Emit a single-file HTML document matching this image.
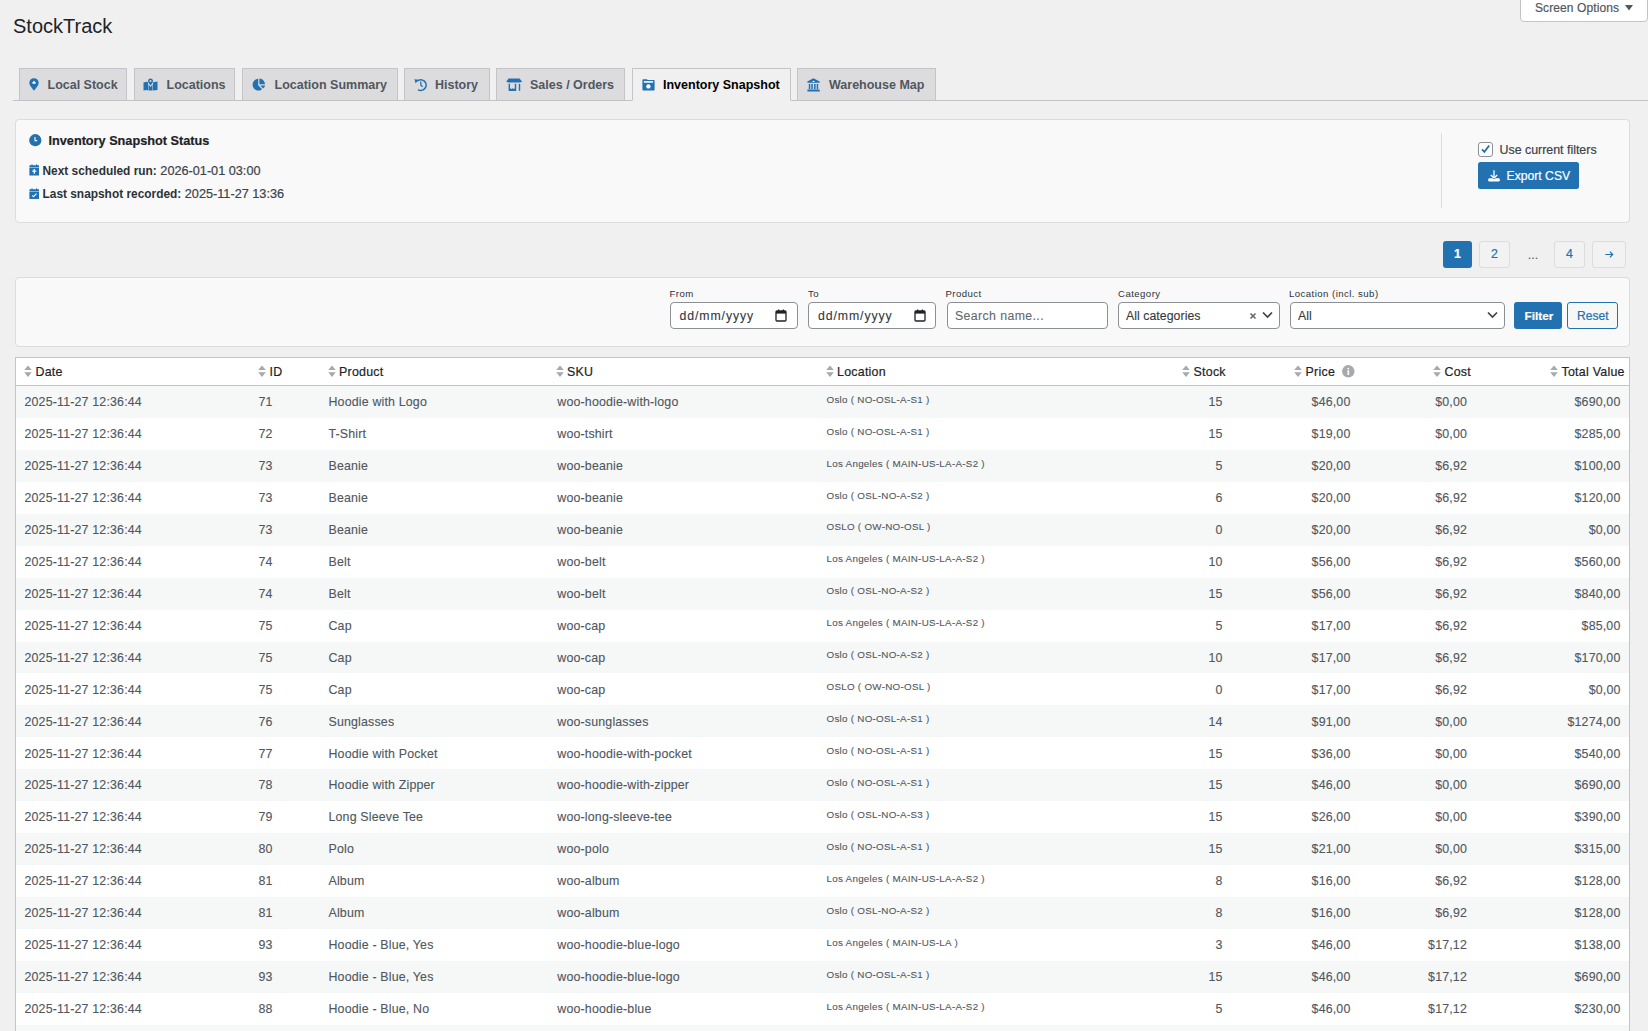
<!DOCTYPE html>
<html><head><meta charset="utf-8">
<style>
*{box-sizing:border-box;margin:0;padding:0}
html,body{width:1648px;height:1031px;overflow:hidden;background:#f0f0f1;font-family:"Liberation Sans",sans-serif;color:#3c434a}
.a{position:absolute;white-space:nowrap}
.t{position:absolute;white-space:nowrap;line-height:1;-webkit-text-stroke:0.2px currentColor}
.t b{-webkit-text-stroke:0}
.ht{-webkit-text-stroke:0.2px currentColor}
.it{-webkit-text-stroke:0.1px currentColor}
.loc{-webkit-text-stroke:0.1px currentColor}
.lbl{-webkit-text-stroke:0}
h1{position:absolute;left:13px;top:16px;font-size:20px;font-weight:400;line-height:20px;color:#1d2327}
.so{position:absolute;left:1520px;top:-4px;width:128px;height:26px;background:#fff;border:1px solid #c3c4c7;border-radius:0 0 4px 4px}
.tabline{position:absolute;left:13px;top:100px;width:1635px;height:1px;background:#c3c4c7}
.tab{position:absolute;top:68px;height:33px;background:#dcdcde;border:1px solid #c3c4c7;}
.tab.act{background:#f0f0f1;border-bottom-color:#f0f0f1}
.tabt{position:absolute;top:78.8px;font-size:12.5px;font-weight:700;line-height:12.5px;color:#50575e;white-space:nowrap}
.tabt.act{color:#000}
.ico{position:absolute}
.card{position:absolute;left:15px;width:1615px;background:#f9f9f9;border:1px solid #dcdcde;border-radius:4px}
.lbl{position:absolute;top:289.2px;font-size:9.6px;line-height:9.6px;letter-spacing:0.45px;color:#2c3338;white-space:nowrap}
.inp{position:absolute;top:302px;height:27px;background:#fff;border:1px solid #8c8f94;border-radius:4px}
.it{position:absolute;top:310px;font-size:12.3px;line-height:12.3px;color:#32383e;white-space:nowrap}
.btn{position:absolute;border-radius:3px}
.tbl{position:absolute;left:15px;top:357px;width:1615px;height:700px;background:#fff;border:1px solid #c3c4c7}
.hline{position:absolute;left:15px;top:385px;width:1615px;height:1px;background:#c3c4c7}
.ht{position:absolute;top:366px;font-size:12.4px;line-height:12.4px;letter-spacing:0.26px;color:#1d2327;white-space:nowrap}
.sort{position:absolute;top:365px}
.r{position:absolute;left:16px;width:1613px;height:31.9px}
.r.odd{background:#f6f7f7}
.r span{position:absolute;white-space:nowrap}
.c{top:10.2px;font-size:12.4px;line-height:12.4px;letter-spacing:0.17px;color:#50575e;-webkit-text-stroke:0.12px currentColor}
.loc{top:8.7px;font-size:9.8px;line-height:9.8px;letter-spacing:0.28px;color:#50575e}
</style></head><body>

<h1>StockTrack</h1>
<div class="so"></div>
<div class="t" style="left:1535px;top:2px;font-size:12px;letter-spacing:0.1px;color:#50575e">Screen Options</div>
<svg class="ico" style="left:1625px;top:5px" width="8" height="6" viewBox="0 0 8 6"><path d="M0 0H8L4 5.5Z" fill="#50575e"/></svg>

<!-- tabs -->
<div class="tabline"></div>
<div class="tab" style="left:19px;width:108px"></div>
<div class="tab" style="left:134px;width:101px"></div>
<div class="tab" style="left:242px;width:156px"></div>
<div class="tab" style="left:404px;width:86px"></div>
<div class="tab" style="left:496px;width:129px"></div>
<div class="tab act" style="left:632px;width:159px"></div>
<div class="tab" style="left:797px;width:139px"></div>

<span class="tabt" style="left:47.5px">Local Stock</span>
<span class="tabt" style="left:166.5px">Locations</span>
<span class="tabt" style="left:274.5px">Location Summary</span>
<span class="tabt" style="left:435px">History</span>
<span class="tabt" style="left:530px">Sales / Orders</span>
<span class="tabt act" style="left:663px">Inventory Snapshot</span>
<span class="tabt" style="left:829px">Warehouse Map</span>

<!-- tab icons -->
<svg class="ico" style="left:28.5px;top:77.5px" width="10" height="13" viewBox="0 0 10 13"><path d="M5 0.3C2.3 0.3 0.3 2.2 0.3 4.7C0.3 7.3 2.6 9.6 5 12.7C7.4 9.6 9.7 7.3 9.7 4.7C9.7 2.2 7.7 0.3 5 0.3Z" fill="#2271b1"/><path d="M5 2.8L6.6 4.4V5.8H3.4V4.4Z" fill="#fff"/></svg>
<svg class="ico" style="left:143px;top:77.5px" width="15" height="13" viewBox="0 0 15 13"><path d="M0.5 4.5L3.5 3.8L5 4.3V12.5L3.5 12L0.5 12.6Z M10 4.3L14.5 3.5V12L10 12.6Z" fill="#2271b1"/><path d="M7.5 0.5C6 0.5 5 1.6 5 3C5 4.3 6.2 5.8 7.5 7.5C8.8 5.8 10 4.3 10 3C10 1.6 9 0.5 7.5 0.5Z M7.5 2A1 1 0 1 0 7.5 4A1 1 0 1 0 7.5 2Z M5.5 6.5L7.5 9L9.5 6.5V12.6L5.5 12.5Z" fill="#2271b1" fill-rule="evenodd"/></svg>
<svg class="ico" style="left:251.8px;top:77.5px" width="14" height="13" viewBox="0 0 14 13"><path d="M6.2 0.8C3 1 0.6 3.6 0.6 6.8C0.6 10.1 3.3 12.6 6.4 12.6C7.9 12.6 9.1 12.1 10.1 11.3L6.2 7.2Z" fill="#2271b1"/><path d="M7.4 0.4V6.2H13C12.8 3.1 10.4 0.6 7.4 0.4Z" fill="#2271b1"/><path d="M8.3 7.4L11 10.5C12 9.6 12.8 8.6 13.2 7.4Z" fill="#2271b1"/></svg>
<svg class="ico" style="left:413.5px;top:77.5px" width="14" height="14" viewBox="0 0 14 14"><path d="M3.2 3.2A5.3 5.3 0 1 1 4 11.6" fill="none" stroke="#2271b1" stroke-width="1.6"/><path d="M0.4 1.2L4.6 1.7L1.6 5.2Z" fill="#2271b1"/><path d="M6.8 3.4V6.9L8.6 8.8" fill="none" stroke="#2271b1" stroke-width="1.3"/></svg>
<svg class="ico" style="left:505.5px;top:77.5px" width="17" height="14" viewBox="0 0 17 14"><path d="M2.5 0.5H13.5L16.2 3.7L13.6 4.6H2.4L0.2 3.7Z" fill="#2271b1"/><path d="M2.6 5.8H4V10.3L5.4 11L6.6 10.3L7.8 11L8.8 10.3V5.8H10.2V13H2.6Z" fill="#2271b1"/><rect x="12.8" y="5.8" width="1.4" height="7" fill="#2271b1"/></svg>
<svg class="ico" style="left:641.5px;top:78.5px" width="13" height="12" viewBox="0 0 13 12"><path d="M1.3 0.2H5L5.6 1H11.8Q12.6 1 12.6 1.8V10.8Q12.6 11.6 11.8 11.6H1.2Q0.4 11.6 0.4 10.8V1.1Q0.4 0.2 1.3 0.2Z" fill="#2271b1"/><rect x="1.8" y="2.1" width="9.3" height="1.6" fill="#fff"/><circle cx="6.4" cy="7.4" r="2.2" fill="#fff"/></svg>
<svg class="ico" style="left:807px;top:77.5px" width="14" height="14" viewBox="0 0 14 14"><path d="M6.5 0.3L12.7 3.5V4.8H0.4V3.5Z" fill="#2271b1"/><rect x="1.8" y="5.9" width="1.5" height="5.2" fill="#2271b1"/><rect x="4.3" y="5.9" width="1.5" height="5.2" fill="#2271b1"/><rect x="7.1" y="5.9" width="1.5" height="5.2" fill="#2271b1"/><rect x="9.7" y="5.9" width="1.5" height="5.2" fill="#2271b1"/><rect x="0.4" y="11.5" width="12.3" height="2" fill="#2271b1"/><ellipse cx="6.5" cy="3.3" rx="1.2" ry="0.6" fill="#fff"/></svg>

<!-- status card -->
<div class="card" style="top:119px;height:104px"></div>
<svg class="ico" style="left:29px;top:134px" width="13" height="13" viewBox="0 0 13 13"><circle cx="6.3" cy="6.2" r="6.1" fill="#2271b1"/><path d="M6 3V6.6H8.2" fill="none" stroke="#fff" stroke-width="1.1"/></svg>
<span class="t" style="left:48.5px;top:134.5px;font-size:12.7px;font-weight:700;color:#1d2327">Inventory Snapshot Status</span>
<svg class="ico" style="left:28.7px;top:164.4px" width="10.6" height="11.8" viewBox="0 0 11 12" preserveAspectRatio="none"><path d="M1 1.3H2.6V0.3H3.6V1.3H7.4V0.3H8.4V1.3H10Q10.6 1.3 10.6 1.9V3.2H0.4V1.9Q0.4 1.3 1 1.3Z M0.4 3.9H10.6V11.2Q10.6 11.8 10 11.8H1Q0.4 11.8 0.4 11.2Z" fill="#2271b1"/><path d="M5.5 5.2V9.8M3.4 7.3H7.6" stroke="#fff" stroke-width="1.3"/></svg>
<span class="t" style="left:42.5px;top:165px;font-size:12.7px;color:#3c434a"><b style="color:#2c3338;font-size:11.9px">Next scheduled run:</b> 2026-01-01 03:00</span>
<svg class="ico" style="left:28.7px;top:187.5px" width="10.6" height="11.8" viewBox="0 0 11 12" preserveAspectRatio="none"><path d="M1 1.3H2.6V0.3H3.6V1.3H7.4V0.3H8.4V1.3H10Q10.6 1.3 10.6 1.9V3.2H0.4V1.9Q0.4 1.3 1 1.3Z M0.4 3.9H10.6V11.2Q10.6 11.8 10 11.8H1Q0.4 11.8 0.4 11.2Z" fill="#2271b1"/><path d="M3.3 7.4L4.7 8.8L7.8 5.8" fill="none" stroke="#fff" stroke-width="1.1"/></svg>
<span class="t" style="left:42.5px;top:188px;font-size:12.7px;color:#3c434a"><b style="color:#2c3338;font-size:11.9px">Last snapshot recorded:</b> 2025-11-27 13:36</span>

<div class="a" style="left:1441px;top:133px;width:1px;height:75px;background:#dcdcde"></div>
<div class="a" style="left:1478px;top:142px;width:15px;height:15px;background:#fff;border:1px solid #8c8f94;border-radius:3px"></div>
<svg class="ico" style="left:1479px;top:143px" width="13" height="13" viewBox="0 0 13 13"><path d="M3 6.3L5.4 8.8L10.2 2.5" fill="none" stroke="#2271b1" stroke-width="1.8"/></svg>
<span class="t" style="left:1499.5px;top:144px;font-size:12.4px;color:#3c434a">Use current filters</span>
<div class="btn" style="left:1478px;top:162px;width:101px;height:27px;background:#2271b1;border-radius:2.5px"></div>
<svg class="ico" style="left:1488px;top:170px" width="12" height="12" viewBox="0 0 12 12"><path d="M6 0.2V8" stroke="#fff" stroke-width="1.3"/><path d="M2.8 4.9L6 8L9.2 4.9" stroke="#fff" stroke-width="1.4" fill="none"/><rect x="0.2" y="8.2" width="11.6" height="3.4" rx="1.3" fill="#fff"/><path d="M4.2 8.2L6 9.3L7.8 8.2Z" fill="#2271b1"/></svg>
<span class="t" style="left:1506.5px;top:170px;font-size:12.2px;color:#fff">Export CSV</span>

<!-- pagination -->
<div class="btn" style="left:1443px;top:241px;width:29px;height:27px;background:#2271b1"></div>
<span class="t" style="left:1454px;top:248.3px;font-size:12.4px;font-weight:700;color:#fff">1</span>
<div class="btn" style="left:1479px;top:241px;width:31px;height:27px;background:#f2f2f3;border:1px solid #dcdcde"></div>
<span class="t" style="left:1491px;top:248.3px;font-size:12.4px;color:#2271b1">2</span>
<span class="t" style="left:1527.5px;top:249.5px;font-size:11px;color:#50575e">…</span>
<div class="btn" style="left:1554px;top:241px;width:31px;height:27px;background:#f2f2f3;border:1px solid #dcdcde"></div>
<span class="t" style="left:1566px;top:248.3px;font-size:12.4px;color:#2271b1">4</span>
<div class="btn" style="left:1592px;top:241px;width:34px;height:27px;background:#f2f2f3;border:1px solid #dcdcde"></div>
<svg class="ico" style="left:1605px;top:250.5px" width="9" height="7" viewBox="0 0 9 7"><path d="M0.3 3.5H7.6M4.9 0.7L7.7 3.5L4.9 6.3" fill="none" stroke="#2271b1" stroke-width="1.2"/></svg>

<!-- filter card -->
<div class="card" style="top:277px;height:70px"></div>
<span class="lbl" style="left:669.5px">From</span>
<div class="inp" style="left:670px;width:128px"></div>
<span class="it" style="left:679.5px;letter-spacing:0.9px">dd/mm/yyyy</span>
<svg class="ico" style="left:775px;top:309px" width="12" height="13" viewBox="0 0 12 13"><rect x="1" y="2" width="10" height="10" rx="1" fill="none" stroke="#1d2327" stroke-width="1.3"/><rect x="1" y="2" width="10" height="2.6" fill="#1d2327"/><rect x="3" y="0.5" width="1.2" height="2" fill="#1d2327"/><rect x="7.8" y="0.5" width="1.2" height="2" fill="#1d2327"/></svg>
<span class="lbl" style="left:808px">To</span>
<div class="inp" style="left:808px;width:128px"></div>
<span class="it" style="left:818px;letter-spacing:0.9px">dd/mm/yyyy</span>
<svg class="ico" style="left:913.5px;top:309px" width="12" height="13" viewBox="0 0 12 13"><rect x="1" y="2" width="10" height="10" rx="1" fill="none" stroke="#1d2327" stroke-width="1.3"/><rect x="1" y="2" width="10" height="2.6" fill="#1d2327"/><rect x="3" y="0.5" width="1.2" height="2" fill="#1d2327"/><rect x="7.8" y="0.5" width="1.2" height="2" fill="#1d2327"/></svg>
<span class="lbl" style="left:945.5px">Product</span>
<div class="inp" style="left:947px;width:161px"></div>
<span class="it" style="left:955px;color:#646970;letter-spacing:0.4px">Search name...</span>
<span class="lbl" style="left:1118px">Category</span>
<div class="inp" style="left:1118px;width:162px"></div>
<span class="it" style="left:1126px;letter-spacing:0.05px">All categories</span>
<svg class="ico" style="left:1249px;top:312px" width="8" height="8" viewBox="0 0 8 8"><path d="M1.5 1.5L6.5 6.5M6.5 1.5L1.5 6.5" stroke="#646970" stroke-width="1.6"/></svg>
<svg class="ico" style="left:1262px;top:311px" width="11" height="8" viewBox="0 0 11 8"><path d="M1 1.5L5.5 6L10 1.5" fill="none" stroke="#3c434a" stroke-width="1.7"/></svg>
<span class="lbl" style="left:1289px">Location (incl. sub)</span>
<div class="inp" style="left:1290px;width:215px"></div>
<span class="it" style="left:1298px">All</span>
<svg class="ico" style="left:1486.5px;top:311px" width="11" height="8" viewBox="0 0 11 8"><path d="M1 1.5L5.5 6L10 1.5" fill="none" stroke="#3c434a" stroke-width="1.7"/></svg>
<div class="btn" style="left:1514px;top:302px;width:48px;height:27px;background:#2271b1"></div>
<span class="t" style="left:1524.5px;top:310.5px;font-size:11.8px;font-weight:700;color:#fff">Filter</span>
<div class="btn" style="left:1567px;top:302px;width:51px;height:27px;background:#f6f7f7;border:1px solid #2271b1"></div>
<span class="t" style="left:1577px;top:310px;font-size:12.1px;color:#2271b1">Reset</span>

<!-- table -->
<div class="tbl"></div>
<div class="hline"></div>
<div style="position:absolute;left:24px"><svg class="sort" width="8" height="12" viewBox="0 0 8 12"><path d="M4 0.4L7.8 5H0.2Z M4 12L7.8 7.2H0.2Z" fill="#a7aaad"/></svg></div>
<span class="ht" style="left:35.5px">Date</span>
<div style="position:absolute;left:257.5px"><svg class="sort" width="8" height="12" viewBox="0 0 8 12"><path d="M4 0.4L7.8 5H0.2Z M4 12L7.8 7.2H0.2Z" fill="#a7aaad"/></svg></div>
<span class="ht" style="left:269.5px">ID</span>
<div style="position:absolute;left:327.5px"><svg class="sort" width="8" height="12" viewBox="0 0 8 12"><path d="M4 0.4L7.8 5H0.2Z M4 12L7.8 7.2H0.2Z" fill="#a7aaad"/></svg></div>
<span class="ht" style="left:339px">Product</span>
<div style="position:absolute;left:556px"><svg class="sort" width="8" height="12" viewBox="0 0 8 12"><path d="M4 0.4L7.8 5H0.2Z M4 12L7.8 7.2H0.2Z" fill="#a7aaad"/></svg></div>
<span class="ht" style="left:567px">SKU</span>
<div style="position:absolute;left:826px"><svg class="sort" width="8" height="12" viewBox="0 0 8 12"><path d="M4 0.4L7.8 5H0.2Z M4 12L7.8 7.2H0.2Z" fill="#a7aaad"/></svg></div>
<span class="ht" style="left:837px">Location</span>
<div style="position:absolute;left:1181.5px"><svg class="sort" width="8" height="12" viewBox="0 0 8 12"><path d="M4 0.4L7.8 5H0.2Z M4 12L7.8 7.2H0.2Z" fill="#a7aaad"/></svg></div>
<span class="ht" style="left:1193.5px">Stock</span>
<div style="position:absolute;left:1294px"><svg class="sort" width="8" height="12" viewBox="0 0 8 12"><path d="M4 0.4L7.8 5H0.2Z M4 12L7.8 7.2H0.2Z" fill="#a7aaad"/></svg></div>
<span class="ht" style="left:1305.5px">Price</span>
<svg class="ico" style="left:1341.5px;top:365px" width="13" height="13" viewBox="0 0 13 13"><circle cx="6.3" cy="6.3" r="6.2" fill="#a7aaad"/><circle cx="6.3" cy="3.6" r="0.9" fill="#fff"/><rect x="5.5" y="5.2" width="1.6" height="4.8" fill="#fff"/></svg>
<div style="position:absolute;left:1432.5px"><svg class="sort" width="8" height="12" viewBox="0 0 8 12"><path d="M4 0.4L7.8 5H0.2Z M4 12L7.8 7.2H0.2Z" fill="#a7aaad"/></svg></div>
<span class="ht" style="left:1444.5px">Cost</span>
<div style="position:absolute;left:1549.5px"><svg class="sort" width="8" height="12" viewBox="0 0 8 12"><path d="M4 0.4L7.8 5H0.2Z M4 12L7.8 7.2H0.2Z" fill="#a7aaad"/></svg></div>
<span class="ht" style="left:1561.5px">Total Value</span>

<div class="r odd" style="top:386.00px"><span class="c" style="left:8.5px">2025-11-27 12:36:44</span><span class="c" style="left:242.5px">71</span><span class="c" style="left:312.5px">Hoodie with Logo</span><span class="c" style="left:541.3px">woo-hoodie-with-logo</span><span class="loc" style="left:810.5px">Oslo ( NO-OSL-A-S1 )</span><span class="c" style="right:406.5px">15</span><span class="c" style="right:278.5px">$46,00</span><span class="c" style="right:162px">$0,00</span><span class="c" style="right:8.5px">$690,00</span></div>
<div class="r" style="top:417.94px"><span class="c" style="left:8.5px">2025-11-27 12:36:44</span><span class="c" style="left:242.5px">72</span><span class="c" style="left:312.5px">T-Shirt</span><span class="c" style="left:541.3px">woo-tshirt</span><span class="loc" style="left:810.5px">Oslo ( NO-OSL-A-S1 )</span><span class="c" style="right:406.5px">15</span><span class="c" style="right:278.5px">$19,00</span><span class="c" style="right:162px">$0,00</span><span class="c" style="right:8.5px">$285,00</span></div>
<div class="r odd" style="top:449.88px"><span class="c" style="left:8.5px">2025-11-27 12:36:44</span><span class="c" style="left:242.5px">73</span><span class="c" style="left:312.5px">Beanie</span><span class="c" style="left:541.3px">woo-beanie</span><span class="loc" style="left:810.5px">Los Angeles ( MAIN-US-LA-A-S2 )</span><span class="c" style="right:406.5px">5</span><span class="c" style="right:278.5px">$20,00</span><span class="c" style="right:162px">$6,92</span><span class="c" style="right:8.5px">$100,00</span></div>
<div class="r" style="top:481.82px"><span class="c" style="left:8.5px">2025-11-27 12:36:44</span><span class="c" style="left:242.5px">73</span><span class="c" style="left:312.5px">Beanie</span><span class="c" style="left:541.3px">woo-beanie</span><span class="loc" style="left:810.5px">Oslo ( OSL-NO-A-S2 )</span><span class="c" style="right:406.5px">6</span><span class="c" style="right:278.5px">$20,00</span><span class="c" style="right:162px">$6,92</span><span class="c" style="right:8.5px">$120,00</span></div>
<div class="r odd" style="top:513.76px"><span class="c" style="left:8.5px">2025-11-27 12:36:44</span><span class="c" style="left:242.5px">73</span><span class="c" style="left:312.5px">Beanie</span><span class="c" style="left:541.3px">woo-beanie</span><span class="loc" style="left:810.5px">OSLO ( OW-NO-OSL )</span><span class="c" style="right:406.5px">0</span><span class="c" style="right:278.5px">$20,00</span><span class="c" style="right:162px">$6,92</span><span class="c" style="right:8.5px">$0,00</span></div>
<div class="r" style="top:545.70px"><span class="c" style="left:8.5px">2025-11-27 12:36:44</span><span class="c" style="left:242.5px">74</span><span class="c" style="left:312.5px">Belt</span><span class="c" style="left:541.3px">woo-belt</span><span class="loc" style="left:810.5px">Los Angeles ( MAIN-US-LA-A-S2 )</span><span class="c" style="right:406.5px">10</span><span class="c" style="right:278.5px">$56,00</span><span class="c" style="right:162px">$6,92</span><span class="c" style="right:8.5px">$560,00</span></div>
<div class="r odd" style="top:577.64px"><span class="c" style="left:8.5px">2025-11-27 12:36:44</span><span class="c" style="left:242.5px">74</span><span class="c" style="left:312.5px">Belt</span><span class="c" style="left:541.3px">woo-belt</span><span class="loc" style="left:810.5px">Oslo ( OSL-NO-A-S2 )</span><span class="c" style="right:406.5px">15</span><span class="c" style="right:278.5px">$56,00</span><span class="c" style="right:162px">$6,92</span><span class="c" style="right:8.5px">$840,00</span></div>
<div class="r" style="top:609.58px"><span class="c" style="left:8.5px">2025-11-27 12:36:44</span><span class="c" style="left:242.5px">75</span><span class="c" style="left:312.5px">Cap</span><span class="c" style="left:541.3px">woo-cap</span><span class="loc" style="left:810.5px">Los Angeles ( MAIN-US-LA-A-S2 )</span><span class="c" style="right:406.5px">5</span><span class="c" style="right:278.5px">$17,00</span><span class="c" style="right:162px">$6,92</span><span class="c" style="right:8.5px">$85,00</span></div>
<div class="r odd" style="top:641.52px"><span class="c" style="left:8.5px">2025-11-27 12:36:44</span><span class="c" style="left:242.5px">75</span><span class="c" style="left:312.5px">Cap</span><span class="c" style="left:541.3px">woo-cap</span><span class="loc" style="left:810.5px">Oslo ( OSL-NO-A-S2 )</span><span class="c" style="right:406.5px">10</span><span class="c" style="right:278.5px">$17,00</span><span class="c" style="right:162px">$6,92</span><span class="c" style="right:8.5px">$170,00</span></div>
<div class="r" style="top:673.46px"><span class="c" style="left:8.5px">2025-11-27 12:36:44</span><span class="c" style="left:242.5px">75</span><span class="c" style="left:312.5px">Cap</span><span class="c" style="left:541.3px">woo-cap</span><span class="loc" style="left:810.5px">OSLO ( OW-NO-OSL )</span><span class="c" style="right:406.5px">0</span><span class="c" style="right:278.5px">$17,00</span><span class="c" style="right:162px">$6,92</span><span class="c" style="right:8.5px">$0,00</span></div>
<div class="r odd" style="top:705.40px"><span class="c" style="left:8.5px">2025-11-27 12:36:44</span><span class="c" style="left:242.5px">76</span><span class="c" style="left:312.5px">Sunglasses</span><span class="c" style="left:541.3px">woo-sunglasses</span><span class="loc" style="left:810.5px">Oslo ( NO-OSL-A-S1 )</span><span class="c" style="right:406.5px">14</span><span class="c" style="right:278.5px">$91,00</span><span class="c" style="right:162px">$0,00</span><span class="c" style="right:8.5px">$1274,00</span></div>
<div class="r" style="top:737.34px"><span class="c" style="left:8.5px">2025-11-27 12:36:44</span><span class="c" style="left:242.5px">77</span><span class="c" style="left:312.5px">Hoodie with Pocket</span><span class="c" style="left:541.3px">woo-hoodie-with-pocket</span><span class="loc" style="left:810.5px">Oslo ( NO-OSL-A-S1 )</span><span class="c" style="right:406.5px">15</span><span class="c" style="right:278.5px">$36,00</span><span class="c" style="right:162px">$0,00</span><span class="c" style="right:8.5px">$540,00</span></div>
<div class="r odd" style="top:769.28px"><span class="c" style="left:8.5px">2025-11-27 12:36:44</span><span class="c" style="left:242.5px">78</span><span class="c" style="left:312.5px">Hoodie with Zipper</span><span class="c" style="left:541.3px">woo-hoodie-with-zipper</span><span class="loc" style="left:810.5px">Oslo ( NO-OSL-A-S1 )</span><span class="c" style="right:406.5px">15</span><span class="c" style="right:278.5px">$46,00</span><span class="c" style="right:162px">$0,00</span><span class="c" style="right:8.5px">$690,00</span></div>
<div class="r" style="top:801.22px"><span class="c" style="left:8.5px">2025-11-27 12:36:44</span><span class="c" style="left:242.5px">79</span><span class="c" style="left:312.5px">Long Sleeve Tee</span><span class="c" style="left:541.3px">woo-long-sleeve-tee</span><span class="loc" style="left:810.5px">Oslo ( OSL-NO-A-S3 )</span><span class="c" style="right:406.5px">15</span><span class="c" style="right:278.5px">$26,00</span><span class="c" style="right:162px">$0,00</span><span class="c" style="right:8.5px">$390,00</span></div>
<div class="r odd" style="top:833.16px"><span class="c" style="left:8.5px">2025-11-27 12:36:44</span><span class="c" style="left:242.5px">80</span><span class="c" style="left:312.5px">Polo</span><span class="c" style="left:541.3px">woo-polo</span><span class="loc" style="left:810.5px">Oslo ( NO-OSL-A-S1 )</span><span class="c" style="right:406.5px">15</span><span class="c" style="right:278.5px">$21,00</span><span class="c" style="right:162px">$0,00</span><span class="c" style="right:8.5px">$315,00</span></div>
<div class="r" style="top:865.10px"><span class="c" style="left:8.5px">2025-11-27 12:36:44</span><span class="c" style="left:242.5px">81</span><span class="c" style="left:312.5px">Album</span><span class="c" style="left:541.3px">woo-album</span><span class="loc" style="left:810.5px">Los Angeles ( MAIN-US-LA-A-S2 )</span><span class="c" style="right:406.5px">8</span><span class="c" style="right:278.5px">$16,00</span><span class="c" style="right:162px">$6,92</span><span class="c" style="right:8.5px">$128,00</span></div>
<div class="r odd" style="top:897.04px"><span class="c" style="left:8.5px">2025-11-27 12:36:44</span><span class="c" style="left:242.5px">81</span><span class="c" style="left:312.5px">Album</span><span class="c" style="left:541.3px">woo-album</span><span class="loc" style="left:810.5px">Oslo ( OSL-NO-A-S2 )</span><span class="c" style="right:406.5px">8</span><span class="c" style="right:278.5px">$16,00</span><span class="c" style="right:162px">$6,92</span><span class="c" style="right:8.5px">$128,00</span></div>
<div class="r" style="top:928.98px"><span class="c" style="left:8.5px">2025-11-27 12:36:44</span><span class="c" style="left:242.5px">93</span><span class="c" style="left:312.5px">Hoodie - Blue, Yes</span><span class="c" style="left:541.3px">woo-hoodie-blue-logo</span><span class="loc" style="left:810.5px">Los Angeles ( MAIN-US-LA )</span><span class="c" style="right:406.5px">3</span><span class="c" style="right:278.5px">$46,00</span><span class="c" style="right:162px">$17,12</span><span class="c" style="right:8.5px">$138,00</span></div>
<div class="r odd" style="top:960.92px"><span class="c" style="left:8.5px">2025-11-27 12:36:44</span><span class="c" style="left:242.5px">93</span><span class="c" style="left:312.5px">Hoodie - Blue, Yes</span><span class="c" style="left:541.3px">woo-hoodie-blue-logo</span><span class="loc" style="left:810.5px">Oslo ( NO-OSL-A-S1 )</span><span class="c" style="right:406.5px">15</span><span class="c" style="right:278.5px">$46,00</span><span class="c" style="right:162px">$17,12</span><span class="c" style="right:8.5px">$690,00</span></div>
<div class="r" style="top:992.86px"><span class="c" style="left:8.5px">2025-11-27 12:36:44</span><span class="c" style="left:242.5px">88</span><span class="c" style="left:312.5px">Hoodie - Blue, No</span><span class="c" style="left:541.3px">woo-hoodie-blue</span><span class="loc" style="left:810.5px">Los Angeles ( MAIN-US-LA-A-S2 )</span><span class="c" style="right:406.5px">5</span><span class="c" style="right:278.5px">$46,00</span><span class="c" style="right:162px">$17,12</span><span class="c" style="right:8.5px">$230,00</span></div>
<div class="r odd" style="top:1024.80px"><span class="c" style="left:8.5px">2025-11-27 12:36:44</span><span class="c" style="left:242.5px">85</span><span class="c" style="left:312.5px">Hoodie - Blue, No</span><span class="c" style="left:541.3px">woo-hoodie-blue</span><span class="loc" style="left:810.5px">Oslo ( NO-OSL-A-S1 )</span><span class="c" style="right:406.5px">15</span><span class="c" style="right:278.5px">$46,00</span><span class="c" style="right:162px">$17,12</span><span class="c" style="right:8.5px">$690,00</span></div>

</body></html>
